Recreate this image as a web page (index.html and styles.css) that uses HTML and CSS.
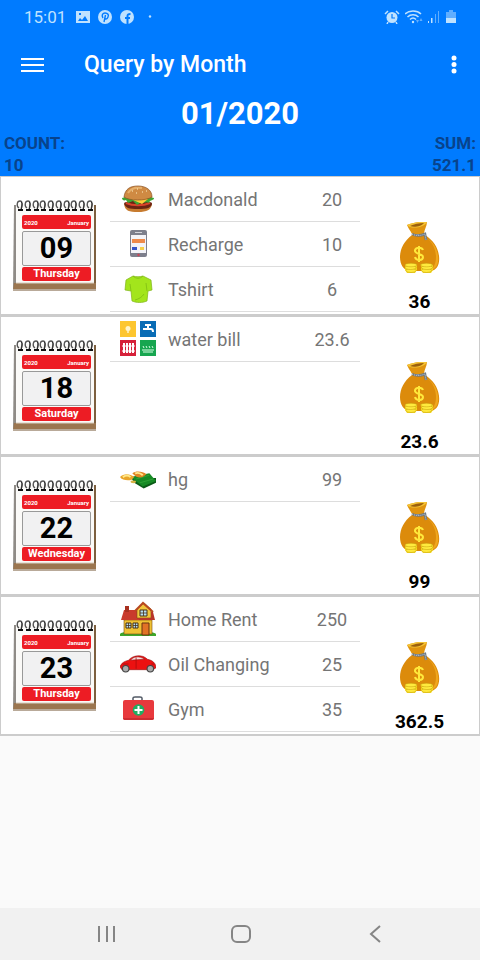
FILE: index.html
```html
<!DOCTYPE html>
<html lang="en">
<head>
    <meta charset="UTF-8">
    <meta name="viewport" content="width=device-width, initial-scale=1">
    <title>Query by Month</title>
    <link rel="stylesheet" href="styles.css">
</head>
<body>
    <!-- shared drawings -->
    <svg class="sprite" aria-hidden="true">
        <symbol id="ring" viewBox="0 0 8 12">
            <path d="M3 8C0 6 1 1 4 1s2 4 1 9" fill="none" stroke="#555" stroke-width="1.300"/>
            <path d="M5 2c2 1 1 5 0 8" fill="none" stroke="#222"/>
            <path d="M2 9h5v2H2z" fill="#111"/>
        </symbol>
        <symbol id="calendar" viewBox="0 0 84 92">
            <path d="M1 5h4v86H0z" fill="#8f8b86"/>
            <path d="M81 5h2v85h-2z" fill="#7d6040"/>
            <path d="M1 83h82v7H0z" fill="#9b7650"/>
            <path d="M0 89h83v2H0z" fill="#b9aa99"/>
            <path d="M3 4h78v79H3z" fill="#fbfaf8"/>
            <path d="M3 83h78" stroke="#d8cdbf"/>
            <use href="#ring" x="3" width="8" height="12"/>
            <use href="#ring" x="11" width="8" height="12"/>
            <use href="#ring" x="19" width="8" height="12"/>
            <use href="#ring" x="26" width="8" height="12"/>
            <use href="#ring" x="34" width="8" height="12"/>
            <use href="#ring" x="42" width="8" height="12"/>
            <use href="#ring" x="50" width="8" height="12"/>
            <use href="#ring" x="57" width="8" height="12"/>
            <use href="#ring" x="65" width="8" height="12"/>
            <use href="#ring" x="73" width="8" height="12"/>
        </symbol>
        <symbol id="bag" viewBox="0 0 40 52">
            <path d="M12 13C4 19 0 27 0 35c0 8 4 13 9 14h22c6-1 9-7 8-15-1-9-6-16-14-21z" fill="#dc8b0b"/>
            <path d="M27 16c6 5 9 12 9 19 0 6-2 10-5 13 6-1 8-8 7-14-1-8-5-14-11-18z" fill="#f0a61c"/>
            <path d="M12 12C10 8 8 6 7 3c5-2 14-4 20-3 0 4-3 8-3 12z" fill="#e0940f"/>
            <path d="M7 3c5-2 14-4 20-3-2 5-16 8-20 3z" fill="#f4c335"/>
            <path d="M10 4c4-2 9-3 14-3-2 3-10 5-14 3z" fill="#9b5f0b"/>
            <path d="M12 12c4 2 8 2 13 0l1 6" fill="none" stroke="#6d7780" stroke-width="2.500"/>
            <path d="M12 12c4 2 8 2 13 0l1 6" fill="none" stroke="#c3ccd3" stroke-dasharray="1 1"/>
            <path d="M23 28c-1-3-7-3-8 0-1 5 8 3 8 7 0 4-7 4-8 0M19 24v16" fill="none" stroke="#ffe83b" stroke-width="2"/>
            <path d="M5 43h12v5l-2 3H7l-2-3zM21 43h12v5l-2 3h-8l-2-3z" fill="#f2d51c"/>
            <g fill="#ffea3d" stroke="#c09b0a" stroke-width=".5">
                <ellipse cx="11" cy="48.500" rx="5" ry="2"/><ellipse cx="10.500" cy="45.500" rx="5.500" ry="2"/><ellipse cx="11" cy="43" rx="6" ry="1.800"/>
                <ellipse cx="26.500" cy="48.500" rx="5" ry="2"/><ellipse cx="27" cy="45.500" rx="5.500" ry="2"/><ellipse cx="26.500" cy="43" rx="6" ry="1.800"/>
            </g>
        </symbol>
        <symbol id="burger" viewBox="0 0 36 36">
            <path d="M4 23c1 7 5 8 14 8s13-2 14-8z" fill="#c77b2f"/>
            <path d="M4 22c4-3 24-3 28 0 0 5-5 6-14 6S5 27 4 22z" fill="#6b2413"/>
            <path d="M6 22c7 3 17 3 24 0" fill="none" stroke="#d9432a" stroke-width="2"/>
            <path d="M2 17c4-2 28-2 32 0 0 3-4 1-5 5-3-2-5 1-7-1l-5 3-4-4-5 2-2-3c-2 1-4 0-4-2z" fill="#3fa535"/>
            <path d="m11 18 17 0-6 5z" fill="#ffce3a"/>
            <path d="M4 16C5 8 10 5 18 5s14 4 14 11c-6 4-23 4-28 0z" fill="#cf8a43" stroke="#8a5122" stroke-width=".7"/>
            <path d="M8 12c3-5 8-6 14-5" fill="none" stroke="#e6b06c" stroke-width="2"/>
            <path d="m12 10 1 0m4-2 1 0m4 3 1 0m3-1 1 0m-11 2 1 0" stroke="#fff0c4"/>
        </symbol>
        <symbol id="phone" viewBox="0 0 36 36">
            <rect x="10" y="4" width="17" height="27" rx="2" fill="#7d7f8c"/>
            <path d="M11 9h15v18H11z" fill="#f3f3f8"/>
            <path d="M15 6.500h7" stroke="#d4d5dc"/>
            <path d="M12 13h13v4H12z" fill="#ee8a4b"/>
            <path d="M12 21h5v3h-5z" fill="#3555c8"/>
            <path d="M20 21h4v3h-4z" fill="#f6cf48"/>
            <circle cx="18.500" cy="29" r="1.200" fill="#cc4455"/>
        </symbol>
        <symbol id="shirt" viewBox="0 0 36 36">
            <path d="M13 5c3 1 7 1 10 0l8 4 1 10-4 1-1 10c-5 2-10 2-15 0l-1-10-6-1 1-10z" fill="#a3e51c" stroke="#7fb31a" stroke-width=".7"/>
            <path d="M13 5c3 3 7 3 10 0M10 13l1 7m15-8 1 8m-3 3c-2 3-5 5-9 6" fill="none" stroke="#7fbd14" stroke-width=".8"/>
        </symbol>
        <symbol id="utilities" viewBox="0 0 36 36">
            <path d="M0 0h16v16H0z" fill="#fdc62f"/>
            <path d="M20 0h16v16H20z" fill="#0a6cb5"/>
            <path d="M0 19h16v16H0z" fill="#d6213a"/>
            <path d="M20 19h16v16H20z" fill="#17a650"/>
            <circle cx="8" cy="7.500" r="2.500" fill="#fff4c9"/>
            <path d="M8 9v3" stroke="#fff4c9" stroke-width="1.500"/>
            <path d="M23 8h8c2 0 2 2 2 3M28 8V4m-3 0h6" fill="none" stroke="#fff" stroke-width="2"/>
            <path d="M4 22v10m3-10v10m3-10v10m3-10v10" stroke="#fff" stroke-width="2"/>
            <path d="M2 25h13M2 30h13" stroke="#fff"/>
            <path d="M22 29h12M23 31h10M23 25l1 2m2-2 1 2m2-2 1 2m2-2 1 2" stroke="#d8ffe4"/>
        </symbol>
        <symbol id="cash" viewBox="0 0 38 36">
            <path d="m12 17 3 5 10 6 13-6V17z" fill="#0b5a17"/>
            <path d="m11 16 20-4 7 8-14 6z" fill="#178a25"/>
            <path d="m17 18 14-4m-10 8 14-4" stroke="#2fa236"/>
            <path d="M0 16c4-4 10-4 15 0l-3 3c-5 1-10 0-12-3z" fill="#e9a52a"/>
            <path d="M13 12c4-3 11-2 15 1l-4 3c-4 1-8 0-11-4z" fill="#e08523"/>
            <path d="M3 16c3-2 6-2 8 0m5-4c3-1 6 0 8 2" fill="none" stroke="#ffe889" stroke-width="2"/>
            <ellipse cx="14" cy="21" rx="3" ry="1.500" fill="#d8b445"/>
        </symbol>
        <symbol id="house" viewBox="0 0 36 36">
            <path d="M0 33c2-4 33-4 36 0v2H0z" fill="#3ea72b"/>
            <path d="M4 19h28v14H4z" fill="#efc132" stroke="#7b4a12" stroke-width=".6"/>
            <path d="M4 9h14l4 10H1z" fill="#c93a2c"/>
            <path d="M5 5h4v6H5z" fill="#a7301f"/>
            <path d="M17 8l7-6 7 6v9H17z" fill="#f2c63c" stroke="#7b4a12" stroke-width=".6"/>
            <path d="m15 10 8-8 10 9" fill="none" stroke="#b84820" stroke-width="2"/>
            <path d="M31 11h2l2 8h-4zM19 17h13v2H19z" fill="#b8352a"/>
            <path d="M20 9h7v6h-7zM6 22h5v5H6zm7 0h5v5h-5z" fill="#b7dff3" stroke="#473019"/>
            <path d="M23.500 9v6M20 12h7M8.500 22v5M6 24.500h5m4.500-2.500v5M13 24.500h5" stroke="#473019" stroke-width=".8"/>
            <path d="M22 22h7v12h-7z" fill="#e17226" stroke="#6b3210"/>
        </symbol>
        <symbol id="car" viewBox="0 0 38 36">
            <path d="M0 21c1-4 5-6 9-7 4-5 14-7 20-1 5 1 9 4 9 9l-3 2H2z" fill="#ec1111" stroke="#8f0909" stroke-width=".6"/>
            <path d="M11 14c3-4 9-5 15-1z" fill="#f9dede" stroke="#8f0909" stroke-width=".6"/>
            <path d="M17 11v12M3 18h6m24 0h3" stroke="#a60c0c" stroke-width=".8"/>
            <circle cx="6" cy="23" r="4" fill="#444"/><circle cx="32" cy="23" r="4" fill="#444"/>
            <circle cx="6" cy="23" r="2.800" fill="#aaa"/><circle cx="32" cy="23" r="2.800" fill="#aaa"/>
        </symbol>
        <symbol id="kit" viewBox="0 0 36 36">
            <path d="M13 10V7c0-1 1-1 2-1h5c1 0 2 0 2 1v3" fill="none" stroke="#515965" stroke-width="1.500"/>
            <rect x="3" y="9" width="31" height="20" rx="2" fill="#e8393d"/>
            <path d="M3 27h31c0 1-1 2-2 2H5c-1 0-2-1-2-2z" fill="#cd2c31"/>
            <circle cx="18.500" cy="19" r="5.800" fill="#22ad62"/>
            <path d="M18.500 15v8M14.500 19h8" stroke="#fff" stroke-width="2"/>
        </symbol>
    </svg>

    <div class="status-bar">
        <span class="clock">15:01</span>
        <svg class="status-icon" viewBox="0 0 14 14"><path fill-rule="evenodd" d="M0 1h14v12H0zM2 11h10L9 6l-3 4-2-2zM3 3v2h2V3z"/></svg>
        <svg class="status-icon" viewBox="0 0 14 14"><circle cx="7" cy="7" r="7"/><path d="M5 8C3 5 5 3 7 3c3 0 4 2 3 4-1 3-3 2-3 1M7.500 5 6 12" fill="none" stroke="#007bff" stroke-width="1.400"/></svg>
        <svg class="status-icon" viewBox="0 0 14 14"><circle cx="7" cy="7" r="7"/><path d="M7.500 14V6c0-2 1-2 3-2M5 8h5" fill="none" stroke="#007bff" stroke-width="2"/></svg>
        <svg class="status-icon" viewBox="0 0 14 14"><circle cx="8" cy="6.500" r="1.200"/></svg>
        <span class="spacer"></span>
        <svg class="status-icon alarm" viewBox="0 0 16 14"><circle cx="8" cy="7.500" r="5.500"/><path d="M1 4l3-3m8 0 3 3M4 12l-1 2m9-2 1 2" stroke="#bfe2ff" stroke-width="1.500"/><path d="M8 4v4h3" fill="none" stroke="#007bff" stroke-width="1.200"/></svg>
        <svg class="status-icon wifi" viewBox="0 0 18 14"><path d="M0 4c4-4 12-4 16 0M2.500 7c3-3 8-3 11 0M5 9.500c2-2 4-2 6 0" fill="none" stroke="#bfe2ff" stroke-width="1.500"/><circle cx="8" cy="12" r="1.200"/><path d="M11 10h3l-1.500 3zM14.500 11l1.500-3 1.500 3z" opacity=".5"/></svg>
        <svg class="status-icon signal" viewBox="0 0 14 14"><path d="M1 11h1v2H1zM4 8h1.500v5H4z"/><path d="M8 4h1v9H8zM11 1h1v12h-1z" opacity=".5"/></svg>
        <svg class="status-icon battery" viewBox="0 0 10 14"><path d="M3 0h4v2h3v7H0V2h3z" opacity=".5"/><path d="M0 8h10v5H0z"/></svg>
    </div>

    <header class="toolbar">
        <button class="icon-btn" aria-label="Open menu">
            <svg width="24" height="24" viewBox="0 0 24 24"><path d="M1 6h23M1 12h23M1 18h23" stroke="#fff" stroke-width="2"/></svg>
        </button>
        <h1>Query by Month</h1>
        <button class="icon-btn" aria-label="More options">
            <svg width="24" height="24" viewBox="0 0 24 24" fill="#fff"><circle cx="12" cy="5" r="2.500"/><circle cx="12" cy="11.500" r="2.500"/><circle cx="12" cy="18" r="2.500"/></svg>
        </button>
    </header>

    <section class="month">
        <h2>01/2020</h2>
        <div class="summary">
            <div>COUNT:<br>10</div>
            <div class="sum">SUM:<br>521.1</div>
        </div>
    </section>

    <main>
        <article class="day">
            <div class="calendar">
                <svg class="calendar-bg"><use href="#calendar"/></svg>
                <div class="calendar-top"><span>2020</span><span>January</span></div>
                <div class="calendar-date">09</div>
                <div class="calendar-weekday">Thursday</div>
            </div>
            <ul class="items">
                <li><svg class="item-icon"><use href="#burger"/></svg><span class="name">Macdonald</span><span class="amount">20</span></li>
                <li><svg class="item-icon"><use href="#phone"/></svg><span class="name">Recharge</span><span class="amount">10</span></li>
                <li><svg class="item-icon"><use href="#shirt"/></svg><span class="name">Tshirt</span><span class="amount">6</span></li>
            </ul>
            <div class="total"><svg class="bag"><use href="#bag"/></svg><strong>36</strong></div>
        </article>

        <article class="day">
            <div class="calendar">
                <svg class="calendar-bg"><use href="#calendar"/></svg>
                <div class="calendar-top"><span>2020</span><span>January</span></div>
                <div class="calendar-date">18</div>
                <div class="calendar-weekday">Saturday</div>
            </div>
            <ul class="items">
                <li><svg class="item-icon"><use href="#utilities"/></svg><span class="name">water bill</span><span class="amount">23.6</span></li>
            </ul>
            <div class="total"><svg class="bag"><use href="#bag"/></svg><strong>23.6</strong></div>
        </article>

        <article class="day">
            <div class="calendar">
                <svg class="calendar-bg"><use href="#calendar"/></svg>
                <div class="calendar-top"><span>2020</span><span>January</span></div>
                <div class="calendar-date">22</div>
                <div class="calendar-weekday">Wednesday</div>
            </div>
            <ul class="items">
                <li><svg class="item-icon"><use href="#cash"/></svg><span class="name">hg</span><span class="amount">99</span></li>
            </ul>
            <div class="total"><svg class="bag"><use href="#bag"/></svg><strong>99</strong></div>
        </article>

        <article class="day">
            <div class="calendar">
                <svg class="calendar-bg"><use href="#calendar"/></svg>
                <div class="calendar-top"><span>2020</span><span>January</span></div>
                <div class="calendar-date">23</div>
                <div class="calendar-weekday">Thursday</div>
            </div>
            <ul class="items">
                <li><svg class="item-icon"><use href="#house"/></svg><span class="name">Home Rent</span><span class="amount">250</span></li>
                <li><svg class="item-icon"><use href="#car"/></svg><span class="name">Oil Changing</span><span class="amount">25</span></li>
                <li><svg class="item-icon"><use href="#kit"/></svg><span class="name">Gym</span><span class="amount">35</span></li>
            </ul>
            <div class="total"><svg class="bag"><use href="#bag"/></svg><strong>362.5</strong></div>
        </article>
    </main>

    <nav class="nav-bar">
        <button aria-label="Recent apps"><svg width="20" height="20" viewBox="0 0 20 20"><path d="M2 2v16M10 2v16M17 2v16"/></svg></button>
        <button aria-label="Home"><svg width="20" height="20" viewBox="0 0 20 20"><rect x="1" y="2" width="18" height="16" rx="5"/></svg></button>
        <button aria-label="Back"><svg width="20" height="20" viewBox="0 0 20 20"><path d="M15 2 6 10l9 8"/></svg></button>
    </nav>
</body>
</html>
```
FILE: styles.css
```css
* {
    box-sizing: border-box;
}
body {
    margin: 0;
    min-height: 100vh;
    display: flex;
    flex-direction: column;
    font-family: Roboto, "Liberation Sans", sans-serif;
    background-color: #fafafa;
}
h1, h2, ul {
    margin: 0;
    padding: 0;
}
button {
    padding: 0;
    border: none;
    background: none;
    cursor: pointer;
}
.sprite {
    display: none;
}

/* phone status bar */
.status-bar {
    display: flex;
    align-items: center;
    gap: 8px;
    height: 34px;
    padding: 0 24px;
    background-color: #007bff;
    color: #bfe2ff;
}
.clock {
    font-size: 17px;
    margin-right: 2px;
}
.status-icon {
    width: 14px;
    height: 14px;
    fill: #bfe2ff;
}
.spacer {
    flex: 1;
}
.alarm {
    width: 16px;
    margin-right: -3px;
}
.wifi {
    width: 18px;
    margin-right: -4px;
}
.signal {
    margin-right: -3px;
}
.battery {
    width: 10px;
}

.toolbar {
    display: flex;
    align-items: center;
    height: 61px;
    padding: 0 14px 0 20px;
    background-color: #007bff;
}
.toolbar h1 {
    flex: 1;
    margin-left: 40px;
    font-size: 23px;
    font-weight: 500;
    color: #fff;
}
.icon-btn, .icon-btn svg {
    display: block;
    width: 24px;
    height: 24px;
}

.month {
    background-color: #007bff;
}
.month h2 {
    font-size: 31px;
    line-height: 37px;
    text-align: center;
    color: #fff;
}
.summary {
    display: flex;
    justify-content: space-between;
    padding: 0 4px;
    font-size: 17px;
    font-weight: bold;
    line-height: 22px;
    color: #08438c;
}
.sum {
    text-align: right;
}

main {
    flex: 1;
}
.day {
    display: grid;
    grid-template-columns: 109px 1fr 119px;
    min-height: 140px;
    background-color: #fff;
    border: 1px solid #ccc;
    border-bottom-width: 2px;
}

.calendar {
    position: relative;
    width: 84px;
    height: 92px;
    margin: 23px 0 0 12px;
    padding: 15px 6px 0 9px;
}
.calendar-bg {
    position: absolute;
    top: 0;
    left: 0;
    width: 84px;
    height: 92px;
}
.calendar-top, .calendar-date, .calendar-weekday {
    position: relative;
    border-radius: 2px;
    font-weight: bold;
    text-align: center;
}
.calendar-top {
    display: flex;
    justify-content: space-between;
    padding: 2px 2px 0;
    margin-bottom: 2px;
    font-size: 6px;
    line-height: 12px;
    color: #fff;
    background-color: #ed1c24;
}
.calendar-date {
    border: 1px solid #999;
    margin-bottom: 1px;
    font-size: 29px;
    line-height: 33px;
    background-color: #f1f1f2;
}
.calendar-weekday {
    font-size: 11px;
    line-height: 14px;
    color: #fff;
    background-color: #ed1c24;
}

.items {
    list-style: none;
}
.items li {
    display: flex;
    align-items: center;
    height: 45px;
    padding-left: 10px;
    border-bottom: 1px solid #ddd;
    font-size: 18px;
    color: #757575;
}
.item-icon {
    width: 36px;
    height: 36px;
    margin-right: 12px;
}
.name {
    flex: 1;
}
.amount {
    width: 56px;
    text-align: center;
}

.total {
    display: flex;
    flex-direction: column;
    align-items: center;
    padding-top: 45px;
}
.bag {
    width: 40px;
    height: 52px;
    margin-bottom: 17px;
}
.total strong {
    font-size: 19px;
    line-height: 22px;
}

/* system buttons */
.nav-bar {
    display: flex;
    height: 52px;
    padding: 0 38px 0 40px;
    background-color: #f1f1f1;
}
.nav-bar button {
    flex: 1;
}
.nav-bar svg {
    display: block;
    margin: 0 auto;
    fill: none;
    stroke: #858585;
    stroke-width: 2;
}
```
